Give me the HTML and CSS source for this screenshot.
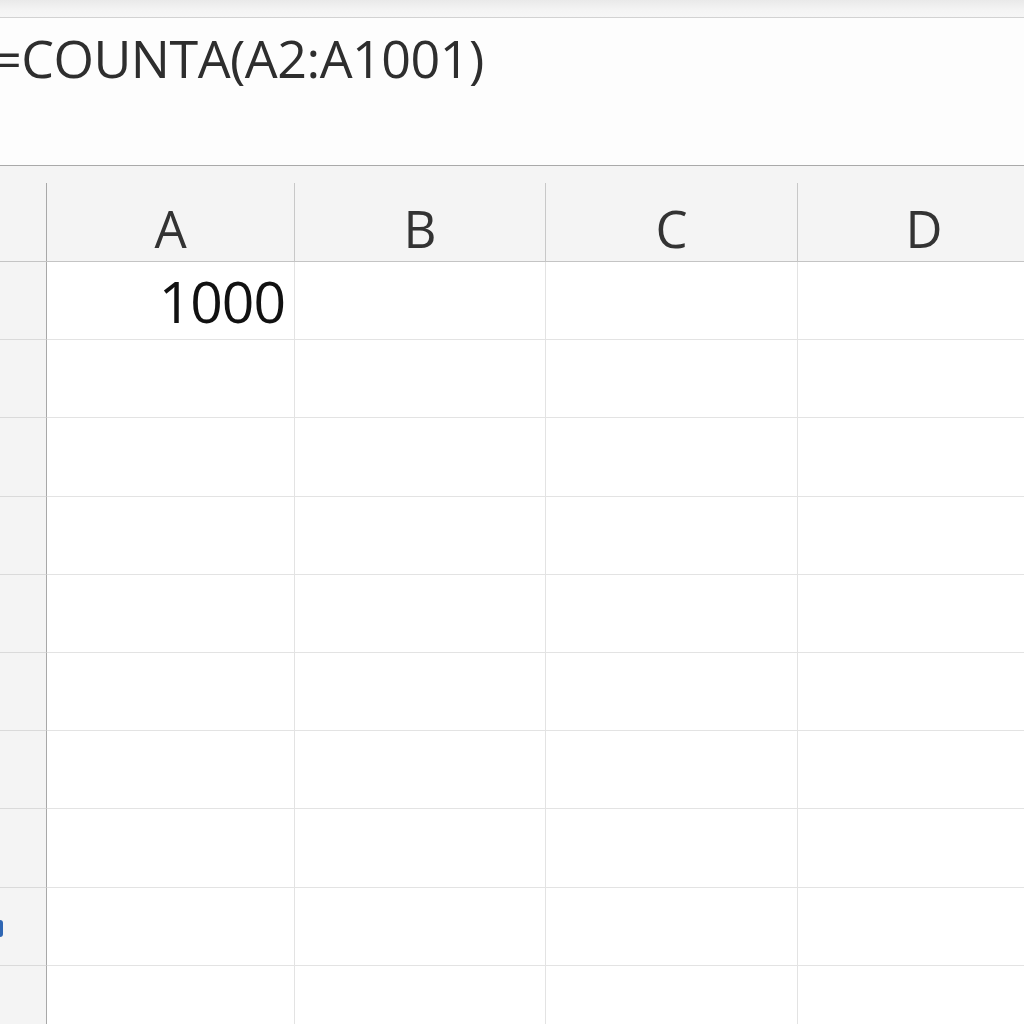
FILE: index.html
```html
<!DOCTYPE html>
<html lang="en">
<head>
  <meta charset="UTF-8">
  <title>Sheet - COUNTA</title>
  <link rel="stylesheet" href="styles.css">
</head>
<body>

  <!-- TOOLBAR STRIP -->
  <div class="topbar"></div>

  <!-- FORMULA BAR -->
  <div class="formula-bar">
    <span class="formula">=COUNTA(A2:A1001)</span>
  </div>

  <!-- GRID -->
  <div class="sheet">
    <!-- header row -->
    <div class="corner"></div>
    <div class="col-head"><span>A</span></div>
    <div class="col-head"><span>B</span></div>
    <div class="col-head"><span>C</span></div>
    <div class="col-head last"><span>D</span></div>

    <!-- row 1 -->
    <div class="row-head"></div>
    <div class="cell num">1000</div>
    <div class="cell"></div>
    <div class="cell"></div>
    <div class="cell last"></div>

    <div class="row-head"></div>
    <div class="cell"></div><div class="cell"></div><div class="cell"></div><div class="cell last"></div>

    <div class="row-head"></div>
    <div class="cell"></div><div class="cell"></div><div class="cell"></div><div class="cell last"></div>

    <div class="row-head"></div>
    <div class="cell"></div><div class="cell"></div><div class="cell"></div><div class="cell last"></div>

    <div class="row-head"></div>
    <div class="cell"></div><div class="cell"></div><div class="cell"></div><div class="cell last"></div>

    <div class="row-head"></div>
    <div class="cell"></div><div class="cell"></div><div class="cell"></div><div class="cell last"></div>

    <div class="row-head"></div>
    <div class="cell"></div><div class="cell"></div><div class="cell"></div><div class="cell last"></div>

    <div class="row-head"></div>
    <div class="cell"></div><div class="cell"></div><div class="cell"></div><div class="cell last"></div>

    <!-- row 9 : bout de numéro visible -->
    <div class="row-head"><span class="row-mark"></span></div>
    <div class="cell"></div><div class="cell"></div><div class="cell"></div><div class="cell last"></div>

    <div class="row-head"></div>
    <div class="cell"></div><div class="cell"></div><div class="cell"></div><div class="cell last"></div>
  </div>

</body>
</html>
```

FILE: styles.css
```css
/* ---------- BASE ---------- */
* {
  margin: 0;
  padding: 0;
  box-sizing: border-box;
}
body {
  background: #ffffff;
  font-family: 'Open Sans', 'Noto Sans', sans-serif;
  color: #333;
  overflow: hidden;
  width: 1024px;
  height: 1024px;
}

/* ---------- TOP STRIP ---------- */
.topbar {
  height: 18px;
  background: linear-gradient(#e9e9e9, #f4f4f4 60%, #f6f6f6);
  border-bottom: 1px solid #d2d2d2;
}

/* ---------- FORMULA BAR ---------- */
.formula-bar {
  height: 148px;
  background: #fdfdfd;
  border-bottom: 1px solid #a9a9a9;
  padding-top: 14px;
  overflow: hidden;
  white-space: nowrap;
}
.formula {
  display: inline-block;
  margin-left: -8px;
  font-size: 52px;
  line-height: 1;
  color: #2e2e2e;
  letter-spacing: -0.5px;
}

/* ---------- GRID ---------- */
.sheet {
  display: grid;
  grid-template-columns: 47px 248px 251px 252px 252px;
  grid-template-rows: 96px;
  grid-auto-rows: 78.2px;
}

/* header row */
.corner,
.col-head {
  background: #f4f4f4;
  border-bottom: 1px solid #c4c4c4;
  padding-top: 17px;
}
.corner::after {
  content: "";
  display: block;
  height: 100%;
  border-right: 1px solid #a8a8a8;
}
.col-head span {
  display: block;
  height: 100%;
  border-right: 1px solid #c8c8c8;
  padding-top: 20px;
  font-size: 51px;
  line-height: 1;
  text-align: center;
  color: #333;
}
.col-head.last span {
  border-right: none;
}

/* row headers */
.row-head {
  background: #f4f4f4;
  border-right: 1px solid #a8a8a8;
  border-bottom: 1px solid #dadada;
  display: flex;
  align-items: center;
  padding-top: 4px;
}
.row-mark {
  display: block;
  width: 3px;
  height: 17px;
  background: #2f66b3;
  border-radius: 0 4px 4px 0;
}

/* cells */
.cell {
  border-right: 1px solid #e3e3e3;
  border-bottom: 1px solid #e3e3e3;
}
.cell.last {
  border-right: none;
}
.cell.num {
  font-size: 57px;
  line-height: 1;
  color: #111;
  text-align: right;
  padding: 11px 9px 0 0;
  letter-spacing: -1px;
}
```
